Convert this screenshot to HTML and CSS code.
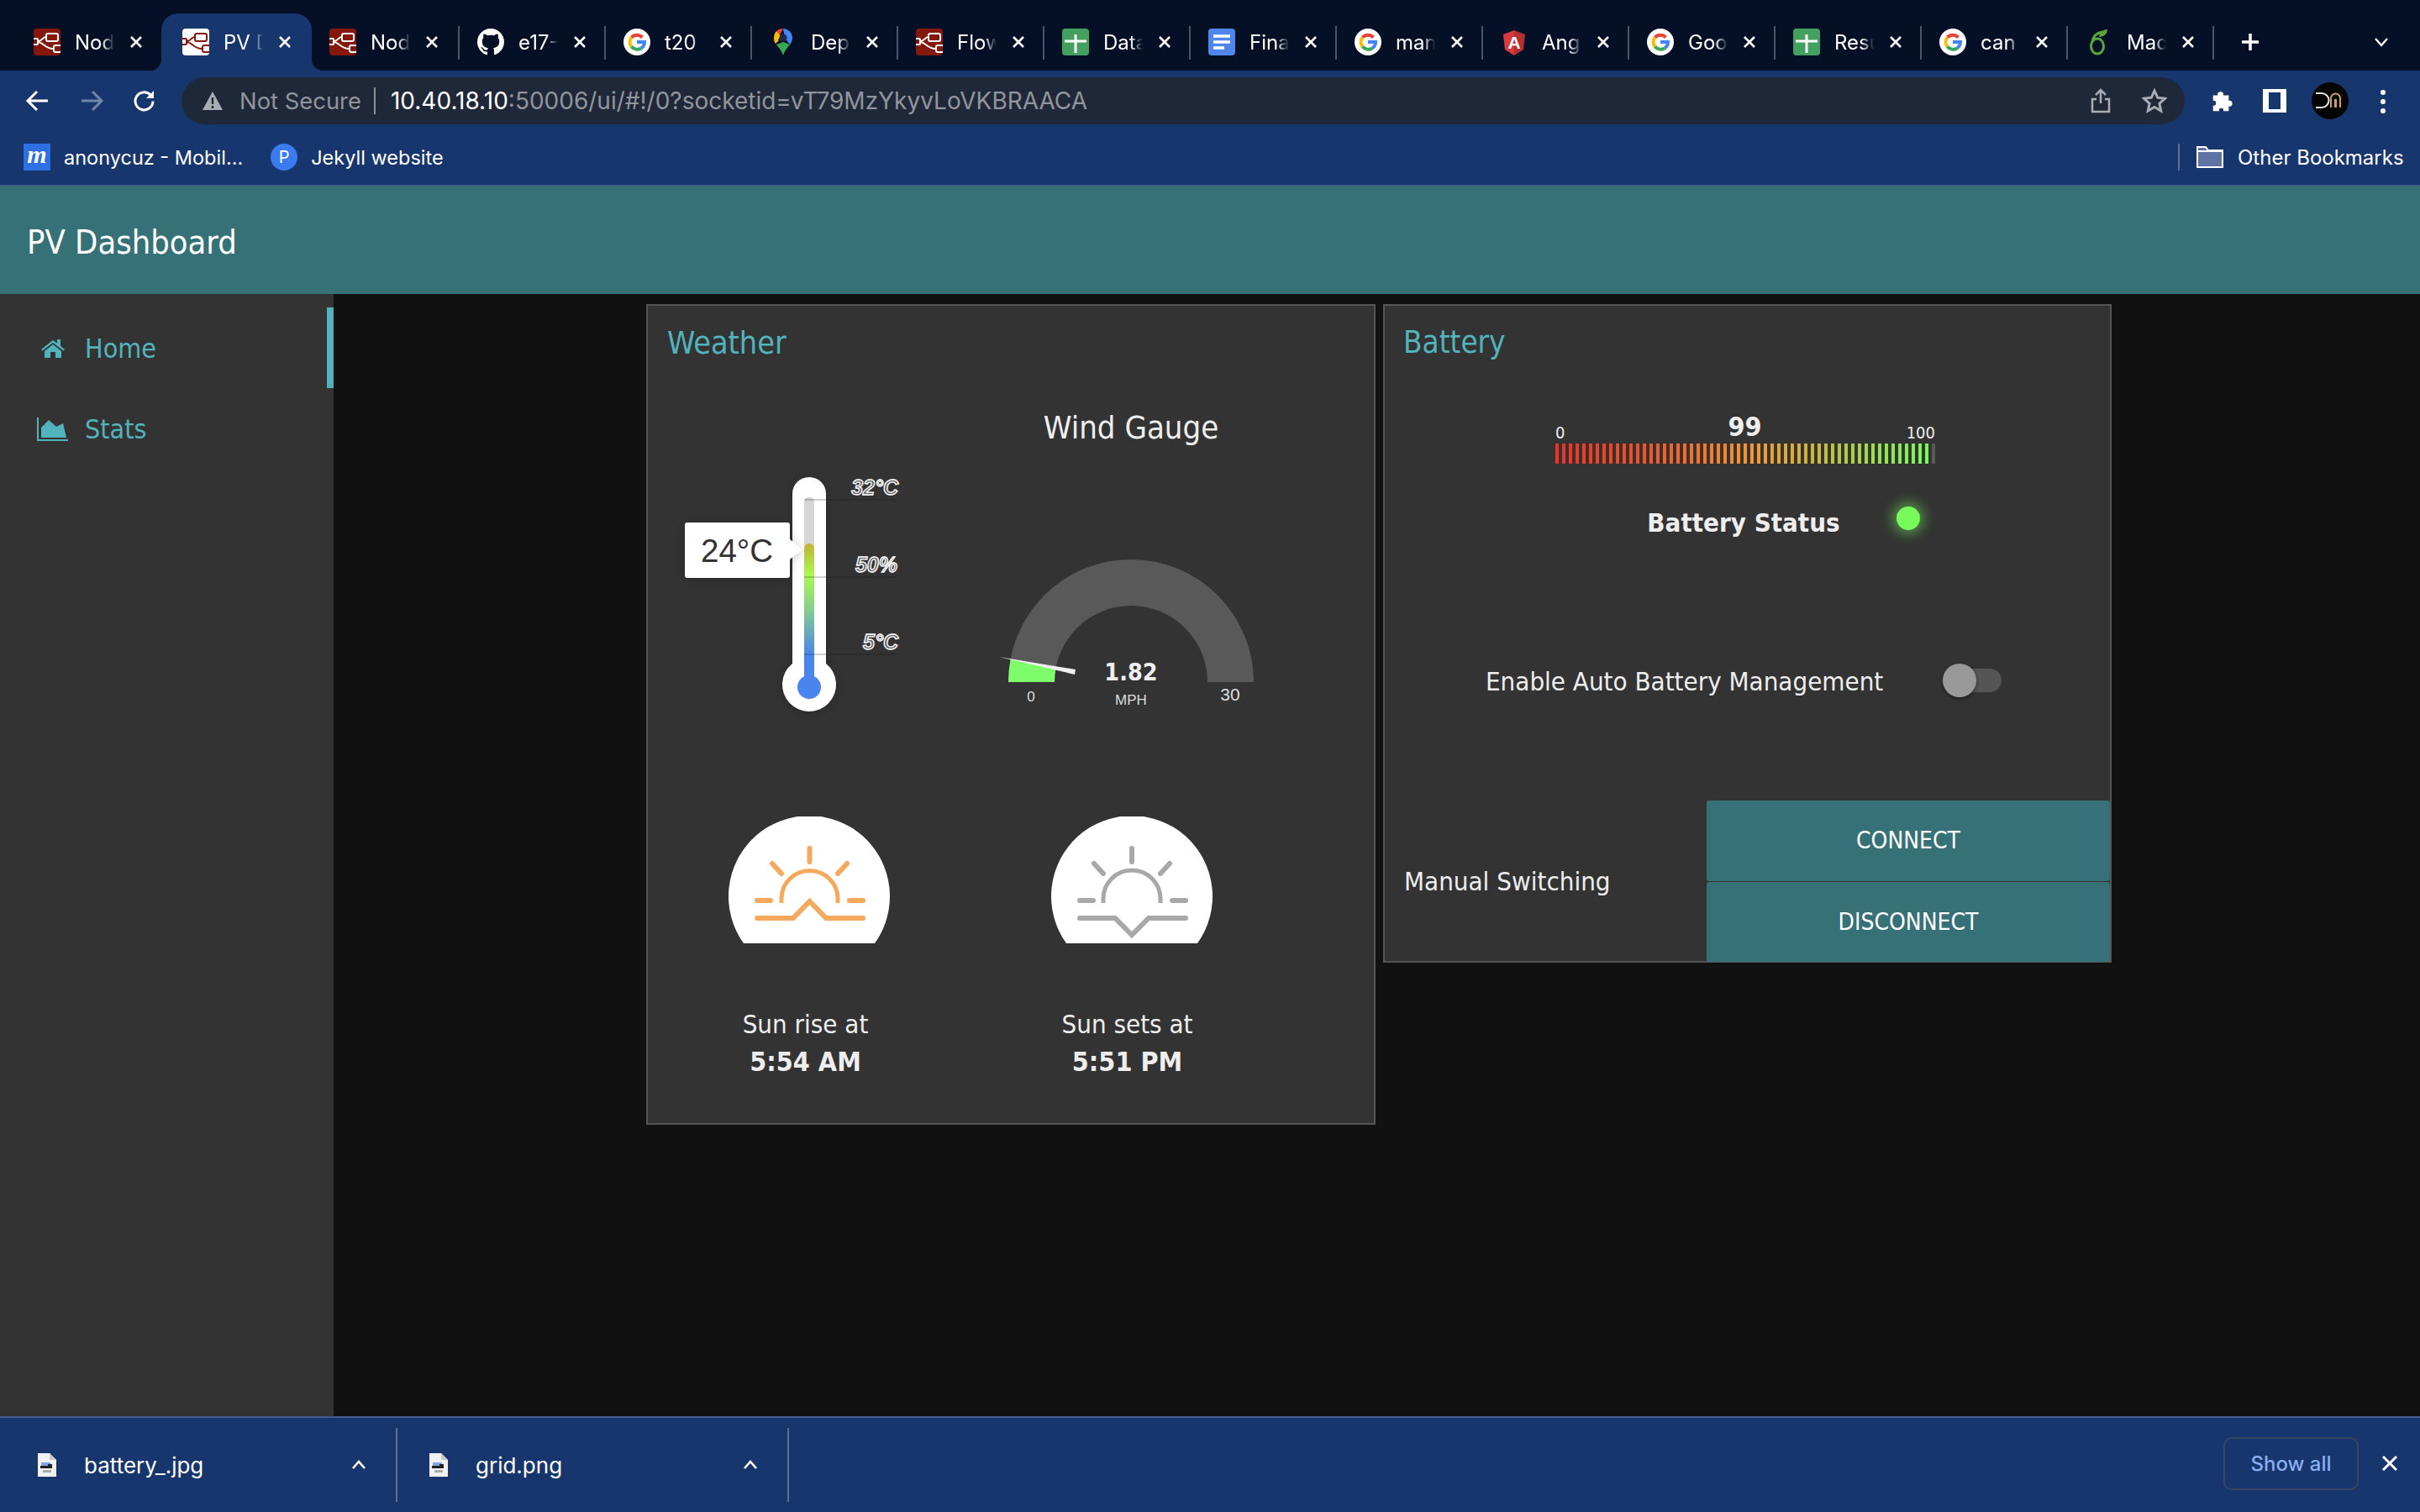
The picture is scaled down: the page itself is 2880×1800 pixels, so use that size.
FILE: index.html
```html
<!DOCTYPE html>
<html lang="en">
<head>
    <meta charset="UTF-8">
    <title>PV Dashboard</title>
    <link rel="stylesheet" href="styles.css">
</head>
<body>
    <svg class="defs" width="0" height="0">
        <symbol id="ic-nodered" viewBox="0 0 32 32">
            <g fill="none" stroke="currentColor" stroke-width="2">
                <rect x="15" y="6" width="14" height="9" rx="2"/>
                <rect x="-1" y="12" width="6" height="7" rx="1"/>
                <rect x="24" y="20" width="9" height="8" rx="2"/>
                <path d="M5 15c6 0 5-5 10-5M5 16c6 0 10 9 19 8"/>
            </g>
        </symbol>
        <symbol id="ic-google" viewBox="0 0 32 32">
            <circle cx="16" cy="16" r="16" fill="#fff"/>
            <path d="M22.5 10.5a9 9 0 0 0-13 0" fill="none" stroke="#ea4335" stroke-width="4"/>
            <path d="M9.5 10.5a9 9 0 0 0 0 11" fill="none" stroke="#fbbc05" stroke-width="4"/>
            <path d="M9.5 21.5a9 9 0 0 0 11.500 2" fill="none" stroke="#34a853" stroke-width="4"/>
            <path d="M21 23.500a9 9 0 0 0 4-7.500h-9" fill="none" stroke="#4285f4" stroke-width="4"/>
        </symbol>
        <symbol id="ic-sheet" viewBox="0 0 32 32">
            <rect width="32" height="32" rx="4" fill="#43a05f"/>
            <path d="M16 7v22M3 15h26" stroke="#fff" stroke-width="3"/>
        </symbol>
    </svg>

    <div class="tabstrip">
        <div class="tab first"><svg class="fav fav-nr"><use href="#ic-nodered"/></svg><span class="tab-text">Nod</span><svg class="tab-x" viewBox="0 0 16 16"><path d="M2 2l12 12M14 2L2 14"/></svg></div>
        <div class="tab active"><svg class="fav fav-nr-light"><use href="#ic-nodered"/></svg><span class="tab-text">PV D</span><svg class="tab-x" viewBox="0 0 16 16"><path d="M2 2l12 12M14 2L2 14"/></svg></div>
        <div class="tab after-active"><svg class="fav fav-nr"><use href="#ic-nodered"/></svg><span class="tab-text">Nod</span><svg class="tab-x" viewBox="0 0 16 16"><path d="M2 2l12 12M14 2L2 14"/></svg></div>
        <div class="tab"><svg class="fav" viewBox="0 0 16 16"><path fill="#fff" d="M8 0C3.58 0 0 3.58 0 8c0 3.54 2.29 6.53 5.47 7.59.4.07.55-.17.55-.38 0-.19-.01-.82-.01-1.490-2.010.37-2.530-.49-2.690-.94-.09-.23-.48-.94-.82-1.130-.28-.15-.68-.52-.01-.53.63-.01 1.080.58 1.230.82.72 1.210 1.870.87 2.330.66.07-.52.28-.87.51-1.070-1.780-.2-3.640-.89-3.640-3.950 0-.87.31-1.590.82-2.150-.08-.2-.36-1.020.08-2.120 0 0 .67-.21 2.200.82.64-.18 1.320-.27 2-.27.68 0 1.360.09 2 .27 1.530-1.040 2.200-.82 2.200-.82.44 1.100.16 1.920.08 2.120.51.56.82 1.270.82 2.150 0 3.070-1.870 3.750-3.650 3.950.29.25.54.73.54 1.480 0 1.070-.01 1.930-.01 2.200 0 .21.15.46.55.38A8.013 8.013 0 0016 8c0-4.420-3.580-8-8-8z"/></svg><span class="tab-text">e17-</span><svg class="tab-x" viewBox="0 0 16 16"><path d="M2 2l12 12M14 2L2 14"/></svg></div>
        <div class="tab"><svg class="fav"><use href="#ic-google"/></svg><span class="tab-text">t20</span><svg class="tab-x" viewBox="0 0 16 16"><path d="M2 2l12 12M14 2L2 14"/></svg></div>
        <div class="tab"><svg class="fav" viewBox="0 0 32 32"><path fill="#34a853" d="M16 32c-2-6-5-9-8-13l8-3 8 3c-3 4-6 7-8 13z"/><path fill="#fbbc05" d="M7 18C5 15 5 13 5 11l6 3z"/><path fill="#ea4335" d="M8 3c2-2 5-3 8-3l-4 8z"/><path fill="#4285f4" d="M16 0c6 0 11 5 11 11 0 3-1 5-3 8l-6-8z"/><path fill="#fbbc05" d="M5 11c0-3 1-6 3-8l5 6-4 6z"/><circle cx="16" cy="11" r="4.500" fill="#1a2a48"/></svg><span class="tab-text">Dep</span><svg class="tab-x" viewBox="0 0 16 16"><path d="M2 2l12 12M14 2L2 14"/></svg></div>
        <div class="tab"><svg class="fav fav-nr"><use href="#ic-nodered"/></svg><span class="tab-text">Flow</span><svg class="tab-x" viewBox="0 0 16 16"><path d="M2 2l12 12M14 2L2 14"/></svg></div>
        <div class="tab"><svg class="fav"><use href="#ic-sheet"/></svg><span class="tab-text">Data</span><svg class="tab-x" viewBox="0 0 16 16"><path d="M2 2l12 12M14 2L2 14"/></svg></div>
        <div class="tab"><svg class="fav" viewBox="0 0 32 32"><rect width="32" height="32" rx="4" fill="#4f86ec"/><path d="M6 9h20M6 16h20M6 23h13" stroke="#fff" stroke-width="3.500"/></svg><span class="tab-text">Fina</span><svg class="tab-x" viewBox="0 0 16 16"><path d="M2 2l12 12M14 2L2 14"/></svg></div>
        <div class="tab"><svg class="fav"><use href="#ic-google"/></svg><span class="tab-text">man</span><svg class="tab-x" viewBox="0 0 16 16"><path d="M2 2l12 12M14 2L2 14"/></svg></div>
        <div class="tab"><svg class="fav" viewBox="0 0 32 32"><path fill="#d63a3e" d="M16 2L3 7l2 18 11 7z"/><path fill="#b52e31" d="M16 2l13 5-2 18-11 7z"/><text x="16" y="24" class="fav-letter">A</text></svg><span class="tab-text">Ang</span><svg class="tab-x" viewBox="0 0 16 16"><path d="M2 2l12 12M14 2L2 14"/></svg></div>
        <div class="tab"><svg class="fav"><use href="#ic-google"/></svg><span class="tab-text">Goo</span><svg class="tab-x" viewBox="0 0 16 16"><path d="M2 2l12 12M14 2L2 14"/></svg></div>
        <div class="tab"><svg class="fav"><use href="#ic-sheet"/></svg><span class="tab-text">Resu</span><svg class="tab-x" viewBox="0 0 16 16"><path d="M2 2l12 12M14 2L2 14"/></svg></div>
        <div class="tab"><svg class="fav"><use href="#ic-google"/></svg><span class="tab-text">can</span><svg class="tab-x" viewBox="0 0 16 16"><path d="M2 2l12 12M14 2L2 14"/></svg></div>
        <div class="tab"><svg class="fav" viewBox="0 0 32 32"><g fill="none" stroke="#5aa63d" stroke-width="3"><ellipse cx="14" cy="21" rx="7.500" ry="9"/><path d="M8 16C9 8 14 5 20 4"/></g><path fill="#5aa63d" d="M16 10c0-5 5-9 10-9 0 5-4 9-10 9z"/></svg><span class="tab-text">Mad</span><svg class="tab-x" viewBox="0 0 16 16"><path d="M2 2l12 12M14 2L2 14"/></svg></div>
        <div class="new-tab"><svg class="plus" viewBox="0 0 24 24"><path d="M12 2v20M2 12h20"/></svg></div>
        <svg class="tab-list" viewBox="0 0 18 12"><path d="M2 2l7 8 7-8"/></svg>
    </div>

    <div class="toolbar">
        <svg class="nav-ic" viewBox="0 0 30 30"><path d="M27 15H4M14 4L3 15l11 11"/></svg>
        <svg class="nav-ic dim" viewBox="0 0 30 30"><path d="M3 15h23M16 4l11 11-11 11"/></svg>
        <svg class="nav-ic reload" viewBox="0 0 30 30"><path d="M25 15.500a10.500 10.500 0 1 1-3-7.500"/><path class="solid" d="M26 3v9h-9z"/></svg>
        <div class="omnibox">
            <svg class="warn" viewBox="0 0 26 24"><path fill="#a9adb3" d="M13 1l12 22H1z"/><path d="M13 8v8M13 18v3" stroke="#1f2838" stroke-width="2.500"/></svg>
            <span class="not-secure">Not Secure</span>
            <span class="omni-sep"></span>
            <span class="url"><b>10.40.18.10</b>:50006/ui/#!/0?socketid=vT79MzYkyvLoVKBRAACA</span>
            <svg class="omni-ic" viewBox="0 0 24 30"><path d="M12 18V2M6 8l6-6 6 6M7 13H2v15h20V13h-5"/></svg>
            <svg class="omni-ic star" viewBox="0 0 30 30"><path d="M15 3l3.700 8.200 8.800 1-6.600 6 1.900 8.800L15 22.500 7.200 27l1.900-8.800-6.600-6 8.800-1z"/></svg>
        </div>
        <svg class="tool-ic puzzle" viewBox="0 0 30 30"><path fill="#fff" d="M4 8h6c-2-6 9-6 7 0h7v7c6-2 6 9 0 7v6h-7c2-5-7-5-5 0H4v-7c5 2 5-8 0-6z"/></svg>
        <svg class="tool-ic panel" viewBox="0 0 28 28"><path fill="#fff" fill-rule="evenodd" d="M0 0h28v28H0zM7 4v20h14V4z"/></svg>
        <svg class="avatar" viewBox="0 0 44 44"><circle cx="22" cy="22" r="22" fill="#050505"/><path d="M5 13h7a8.500 8.500 0 0 1 0 17H5" fill="none" stroke="#e9e4d6" stroke-width="2"/><path d="M23 30V19a5.500 5.500 0 0 1 11 0v11M28 30V21a.5.5 0 0 1 1 0v9" fill="none" stroke="#c9a45a" stroke-width="2"/></svg>
        <div class="kebab"><i></i><i></i><i></i></div>
    </div>

    <div class="bookmarks">
        <span class="bm-m">m</span><span class="bm-text">anonycuz - Mobil...</span>
        <span class="bm-p">P</span><span class="bm-text">Jekyll website</span>
        <span class="bm-sep"></span>
        <svg class="bm-folder" viewBox="0 0 32 26"><path fill="#5f74a4" stroke="#fff" stroke-width="2" d="M1 1h10l3 4h17v20H1z"/><path d="M1 6h30" stroke="#fff" stroke-width="2"/></svg>
        <span class="bm-text other">Other Bookmarks</span>
    </div>

    <header class="app-header">PV Dashboard</header>

    <div class="app-body">
        <nav class="sidenav">
            <a class="nav-item active">
                <span class="nav-icon"><svg width="30" height="24" viewBox="0 0 30 24"><path d="M15 2L1 13l1.500 1.500L15 5l12.500 9.500L29 13l-5-4V1h-4v4.500z"/><path d="M5 15l10-8 10 8v8h-7v-7h-6v7H5z"/></svg></span>
                Home
            </a>
            <a class="nav-item">
                <span class="nav-icon"><svg width="38" height="28" viewBox="0 0 38 28"><path d="M1 0v27h36" fill="none" stroke="currentColor" stroke-width="2"/><path d="M5 24V12l9-9 9 8 8-4 4 17z"/></svg></span>
                Stats
            </a>
        </nav>

        <main class="content">
            <section class="card weather">
                <h2 class="card-title">Weather</h2>
                <div class="weather-grid">
                    <svg class="thermo" viewBox="771 452 384 418">
                        <defs>
                            <linearGradient id="mercury" x1="0" y1="647" x2="0" y2="780" gradientUnits="userSpaceOnUse">
                                <stop offset="0" stop-color="#c2b338"/>
                                <stop offset="0.28" stop-color="#a9f84f"/>
                                <stop offset="0.55" stop-color="#8bd586"/>
                                <stop offset="0.8" stop-color="#68a9bc"/>
                                <stop offset="1" stop-color="#4a84ee"/>
                            </linearGradient>
                            <filter id="soft" x="-30%" y="-30%" width="160%" height="160%"><feDropShadow dx="0" dy="2" stdDeviation="6" flood-color="#000" flood-opacity="0.22"/></filter>
                        </defs>
                        <path filter="url(#soft)" fill="#fff" d="M943 588a20 20 0 0 1 40 0v202a32 32 0 1 1-40 0z"/>
                        <rect x="957" y="592" width="12" height="70" rx="5" fill="#d6d6d6"/>
                        <path fill="url(#mercury)" d="M957 653a6 6 0 0 1 12 0v130h-12z"/>
                        <rect x="957" y="778" width="12" height="30" fill="#4a84ee"/>
                        <circle cx="963" cy="818" r="14" fill="#4a84ee"/>
                        <path d="M957 595h26M957 687h26M957 779h26" stroke="#333" stroke-opacity="0.3" stroke-width="1.500"/>
                        <path d="M983 595h84M983 687h84M983 779h84" stroke="#2a2a2a" stroke-width="1.500"/>
                        <text class="thermo-label" x="1069" y="589">32°C</text>
                        <text class="thermo-label" x="1068" y="681">50%</text>
                        <text class="thermo-label" x="1069" y="773">5°C</text>
                        <path filter="url(#soft)" fill="#fff" d="M818 622h119a3 3 0 0 1 3 3v17l14 12-14 12v19a3 3 0 0 1-3 3H818a3 3 0 0 1-3-3v-60a3 3 0 0 1 3-3z"/>
                        <text class="thermo-value" x="877" y="669">24°C</text>
                    </svg>
                    <div class="gauge">
                        <div class="gauge-title">Wind Gauge</div>
                        <svg class="gauge-svg" viewBox="1155 570 382 300">
                            <path fill="#595959" d="M1200 812a146 146 0 0 1 292 0h-55a91 91 0 0 0-182 0z"/>
                            <path fill="#7dfd6a" d="M1200 812a146 146 0 0 1 2.700-27.600l54 10.400a91 91 0 0 0-1.700 17.200z"/>
                            <path fill="#eee" d="M1189 782l91 15-1 6z"/>
                            <text class="g-bold" x="1346" y="810">1.82</text>
                            <text class="g-small" x="1227" y="835">0</text>
                            <text class="g-small" x="1346" y="839">MPH</text>
                            <text class="g-max" x="1464" y="834">30</text>
                        </svg>
                    </div>
                    <svg class="sun" viewBox="771 972 384 151">
                        <path class="sun-bg" d="M885 1123a96 96 0 1 1 156 0z"/>
                        <g class="sun-lines rise">
                            <path d="M963.500 1010v16M919 1028l11 12M1008 1028l-11 12M901 1072h16M1011 1072h16M901 1093h43l19.500-20 19.500 20h44"/>
                            <path class="thin" d="M930 1075v-5a33.500 33.500 0 0 1 67 0v5"/>
                        </g>
                    </svg>
                    <svg class="sun" viewBox="1155 972 382 151">
                        <path class="sun-bg" d="M1269 1123a96 96 0 1 1 156 0z"/>
                        <g class="sun-lines set">
                            <path d="M1347 1010v16M1302 1028l11 12M1392 1028l-11 12M1285 1072h16M1395 1072h16M1285 1093h42l20 20 20-20h44"/>
                            <path class="thin" d="M1313 1075v-5a34 34 0 0 1 68 0v5"/>
                        </g>
                    </svg>
                    <div class="sun-text">Sun rise at<br><b>5:54 AM</b></div>
                    <div class="sun-text">Sun sets at<br><b>5:51 PM</b></div>
                </div>
            </section>

            <section class="card battery">
                <h2 class="card-title">Battery</h2>
                <div class="level">
                    <div class="level-labels"><span>0</span><b>99</b><span>100</span></div>
                    <div class="level-bars"><div class="level-fill"></div><div class="level-rest"></div></div>
                </div>
                <div class="status-row"><b>Battery Status</b><span class="led"></span></div>
                <div class="toggle-row">
                    <span>Enable Auto Battery Management</span>
                    <span class="toggle"><span class="toggle-thumb"></span></span>
                </div>
                <div class="switch-row">
                    <span class="switch-label">Manual Switching</span>
                    <div class="switch-btns">
                        <button class="btn">CONNECT</button>
                        <button class="btn">DISCONNECT</button>
                    </div>
                </div>
            </section>
        </main>
    </div>

    <footer class="downloads">
        <div class="dl-item">
            <svg class="dl-file" viewBox="0 0 22 28"><path fill="#f1f1f1" d="M0 0h14l8 8v20H0z"/><path fill="#c9c9c9" d="M14 0l8 8h-8z"/><rect x="4" y="11" width="11" height="6" fill="#7fa6e0"/><rect x="3" y="15" width="14" height="3" fill="#222"/><rect x="12" y="13" width="5" height="5" fill="#222"/><rect x="6" y="20" width="10" height="3" fill="#aaa"/></svg>
            <span class="dl-name">battery_.jpg</span>
            <svg class="dl-caret" viewBox="0 0 18 12"><path d="M2 10l7-8 7 8"/></svg>
        </div>
        <div class="dl-item">
            <svg class="dl-file" viewBox="0 0 22 28"><path fill="#f1f1f1" d="M0 0h14l8 8v20H0z"/><path fill="#c9c9c9" d="M14 0l8 8h-8z"/><rect x="4" y="11" width="11" height="6" fill="#7fa6e0"/><rect x="3" y="15" width="14" height="3" fill="#222"/><rect x="12" y="13" width="5" height="5" fill="#222"/><rect x="6" y="20" width="10" height="3" fill="#aaa"/></svg>
            <span class="dl-name">grid.png</span>
            <svg class="dl-caret" viewBox="0 0 18 12"><path d="M2 10l7-8 7 8"/></svg>
        </div>
        <span class="dl-spacer"></span>
        <button class="show-all">Show all</button>
        <svg class="dl-close" viewBox="0 0 18 18"><path d="M1 1l16 16M17 1L1 17"/></svg>
    </footer>
</body>
</html>
```
FILE: styles.css
```css
* {
    box-sizing: border-box;
}
html, body {
    margin: 0;
    height: 100%;
    overflow: hidden;
}
body {
    display: flex;
    flex-direction: column;
    background: #111;
    color: #eee;
    font-family: "DejaVu Sans Condensed", "DejaVu Sans", sans-serif;
    font-stretch: condensed;
}
.defs {
    position: absolute;
}

/* browser chrome */
.tabstrip {
    height: 84px;
    flex: none;
    display: flex;
    align-items: flex-end;
    padding-left: 23px;
    background: #051026;
    font-family: Inter, "Liberation Sans", sans-serif;
    font-stretch: normal;
    color: #fff;
}
.tab {
    position: relative;
    width: 174px;
    height: 68px;
    flex: none;
    display: flex;
    align-items: center;
    padding: 0 0 0 23px;
}
.tab.first {
    padding-left: 17px;
}
.tab.after-active {
    padding-left: 21px;
}
.tab::before {
    content: "";
    position: absolute;
    left: 0;
    top: 15px;
    bottom: 13px;
    border-left: 2px solid #4b5567;
}
.tab.first::before, .tab.active::before, .tab.after-active::before {
    display: none;
}
.tab.active {
    width: 179px;
    margin-left: -5px;
    padding-left: 25px;
    background: #18366e;
    border-radius: 20px 20px 0 0;
}
.tab.active::after {
    content: "";
    position: absolute;
    left: -14px;
    right: -14px;
    bottom: 0;
    height: 14px;
    background:
        radial-gradient(circle at 0 0, transparent 14px, #18366e 14.5px) left bottom / 14px 14px no-repeat,
        radial-gradient(circle at 100% 0, transparent 14px, #18366e 14.5px) right bottom / 14px 14px no-repeat;
}
.fav {
    width: 32px;
    height: 32px;
    flex: none;
}
.fav-nr {
    background: #85180d;
    border-radius: 4px;
    color: #fff;
}
.fav-nr-light {
    background: #fff;
    border-radius: 4px;
    color: #85180d;
}
.fav-letter {
    fill: #fff;
    font: 700 21px "Liberation Sans", sans-serif;
    text-anchor: middle;
}
.tab-text {
    width: 62px;
    margin-left: 17px;
    white-space: nowrap;
    font-size: 24px;
    -webkit-mask-image: linear-gradient(90deg, #000 52%, transparent 76%);
    mask-image: linear-gradient(90deg, #000 52%, transparent 76%);
}
.tab-x {
    width: 16px;
    height: 16px;
    margin-left: 3px;
    fill: none;
    stroke: #fff;
    stroke-width: 2.6;
}
.new-tab {
    position: relative;
    width: 90px;
    height: 68px;
    flex: none;
    display: flex;
    align-items: center;
    padding-left: 33px;
}
.new-tab::before {
    content: "";
    position: absolute;
    left: 0;
    top: 15px;
    bottom: 13px;
    border-left: 2px solid #4b5567;
}
.plus {
    width: 24px;
    height: 24px;
    fill: none;
    stroke: #fff;
    stroke-width: 3.500;
}
.tab-list {
    width: 18px;
    height: 12px;
    margin: 0 0 28px 102px;
    fill: none;
    stroke: #fff;
    stroke-width: 2.400;
}

.toolbar {
    height: 72px;
    flex: none;
    display: flex;
    align-items: flex-start;
    padding: 8px 0 0 30px;
    background: #18366e;
    font-family: Inter, "Liberation Sans", sans-serif;
    font-stretch: normal;
}
.nav-ic {
    width: 30px;
    height: 30px;
    margin: 13px 34px 0 0;
    flex: none;
    fill: none;
    stroke: #fff;
    stroke-width: 3;
}
.nav-ic.dim {
    stroke: #7185ab;
}
.nav-ic .solid {
    fill: #fff;
    stroke: none;
}
.nav-ic.reload {
    margin-right: 0;
    margin-left: -1px;
}
.omnibox {
    width: 2384px;
    height: 56px;
    margin-left: 29px;
    flex: none;
    display: flex;
    align-items: center;
    padding: 0 24px;
    background: #1f2838;
    border-radius: 28px;
    color: #91959d;
    white-space: nowrap;
}
.warn {
    width: 26px;
    height: 24px;
    flex: none;
}
.not-secure {
    margin-left: 19px;
    font-size: 27.400px;
}
.omni-sep {
    height: 32px;
    margin: 0 18px 0 15px;
    border-left: 2px solid #8c9098;
}
.url {
    flex: 1;
    font-size: 28px;
}
.url b {
    font-weight: 400;
    color: #fff;
}
.omni-ic {
    width: 24px;
    height: 30px;
    flex: none;
    fill: none;
    stroke: #a9adb3;
    stroke-width: 2.500;
}
.omni-ic.star {
    width: 30px;
    margin-left: 37px;
    margin-right: -3px;
    stroke-width: 3;
}
.tool-ic {
    flex: none;
    margin-top: 14px;
}
.tool-ic.puzzle {
    width: 28px;
    height: 28px;
    margin-left: 30px;
}
.tool-ic.panel {
    width: 28px;
    height: 28px;
    margin-left: 35px;
}
.avatar {
    width: 44px;
    height: 44px;
    margin: 6px 0 0 30px;
    flex: none;
}
.kebab {
    display: flex;
    flex-direction: column;
    gap: 5px;
    margin: 15px 0 0 38px;
}
.kebab i {
    width: 6px;
    height: 6px;
    border-radius: 50%;
    background: #fff;
}

.bookmarks {
    height: 64px;
    flex: none;
    display: flex;
    align-items: center;
    padding: 0 0 2px 28px;
    background: #18366e;
    color: #fff;
    font-family: Inter, "Liberation Sans", sans-serif;
    font-stretch: normal;
}
.bm-text {
    font-size: 23.500px;
    white-space: nowrap;
}
.bm-m {
    width: 32px;
    height: 32px;
    margin-right: 16px;
    background: #2f6fe4;
    font: italic 700 30px/26px "Liberation Serif", serif;
    text-align: center;
}
.bm-p {
    width: 32px;
    height: 32px;
    margin: 0 16px 0 33px;
    border-radius: 50%;
    background: #3a7bf0;
    font-size: 20px;
    line-height: 32px;
    text-align: center;
}
.bm-sep {
    height: 32px;
    margin-left: auto;
    border-left: 2px solid #5b6f99;
}
.bm-folder {
    width: 32px;
    height: 26px;
    margin: 0 17px 0 20px;
    flex: none;
}
.bm-text.other {
    width: 217px;
    font-size: 24px;
}

/* dashboard */
.app-header {
    height: 130px;
    flex: none;
    display: flex;
    align-items: center;
    padding: 3px 0 0 32px;
    border-top: 2px solid #3f5f8a;
    background: #367178;
    font-size: 39.500px;
    color: #fff;
}
.app-body {
    flex: 1;
    min-height: 0;
    display: flex;
}
.sidenav {
    width: 397px;
    flex: none;
    padding-top: 16px;
    background: #333;
}
.nav-item {
    height: 96px;
    display: flex;
    align-items: center;
    padding-top: 2px;
    color: #52b3bd;
    font-size: 32px;
}
.nav-item.active {
    border-right: 8px solid #52b3bd;
}
.nav-icon {
    width: 101px;
    display: flex;
    justify-content: center;
    padding-left: 24px;
}
.nav-icon svg {
    fill: #52b3bd;
    color: #52b3bd;
}
.content {
    flex: 1;
    display: flex;
    align-items: flex-start;
    gap: 9px;
    padding: 12px 0 0 372px;
}
.card {
    background: #333;
    border: 2px solid #555;
}
.card-title {
    height: 88px;
    margin: 0;
    padding-left: 23px;
    color: #52b3bd;
    font-size: 37.500px;
    font-weight: 400;
    line-height: 88px;
}
.weather {
    width: 868px;
    height: 977px;
}
.battery .card-title {
    padding-left: 22px;
    font-size: 36.500px;
}
.weather-grid {
    display: grid;
    grid-template-columns: 384px 382px;
    grid-template-rows: 418px 151px auto;
}
.thermo, .sun {
    display: block;
    width: 100%;
    height: 100%;
}
.sun {
    grid-row: 2;
    transform: translateY(102px);
}
.thermo-label {
    fill: #666;
    stroke: #fff;
    stroke-width: 1.300;
    font: italic 700 25px "Liberation Sans", sans-serif;
    text-anchor: end;
}
.thermo-value {
    fill: #333;
    font: 38.500px "Liberation Sans", sans-serif;
    text-anchor: middle;
}
.gauge-title {
    height: 118px;
    font-size: 38px;
    line-height: 114px;
    text-align: center;
    color: #eee;
}
.gauge-svg {
    display: block;
    width: 382px;
    height: 300px;
}
.g-bold {
    fill: #eee;
    font-size: 28.500px;
    font-weight: 700;
    text-anchor: middle;
}
.g-small {
    fill: #ddd;
    font: 17px "Liberation Sans", sans-serif;
    text-anchor: middle;
}
.g-max {
    fill: #ddd;
    font: 21px "Liberation Sans", sans-serif;
    text-anchor: middle;
}
.sun-bg {
    fill: #fff;
}
.sun-lines {
    fill: none;
    stroke-width: 6;
    stroke-linecap: round;
}
.sun-lines .thin {
    stroke-width: 5;
    stroke-linecap: butt;
}
.sun-lines.rise {
    stroke: #f5a95c;
}
.sun-lines.set {
    stroke: #a8a8a8;
}
.sun-text {
    grid-row: 3;
    margin-top: 176px;
    padding-right: 9px;
    font-size: 31px;
    line-height: 45px;
    text-align: center;
}
.sun-text b {
    font-size: 32px;
}

.battery {
    width: 867px;
    height: 784px;
}
.level {
    width: 452px;
    margin: 42px 0 0 203px;
}
.level-labels {
    height: 34px;
    display: flex;
    justify-content: space-between;
    align-items: flex-end;
    font-size: 20px;
    line-height: 26px;
}
.level-labels b {
    margin-left: 22px;
    font-size: 32px;
    line-height: 40px;
}
.level-bars {
    height: 24px;
    display: flex;
}
.level-fill {
    flex: 1;
    background: linear-gradient(90deg, #ee3124 0, #f1552a 25%, #f59631 52%, #c8b83c 70%, #8fe74e 88%, #78f95c 100%);
    -webkit-mask-image: repeating-linear-gradient(90deg, #000 0 4px, transparent 4px 8px);
    mask-image: repeating-linear-gradient(90deg, #000 0 4px, transparent 4px 8px);
}
.level-rest {
    width: 4px;
    background: #595959;
}
.status-row {
    height: 50px;
    margin: 45px 0 0 312px;
    display: flex;
    align-items: center;
    font-size: 31px;
}
.status-row b {
    width: 230px;
    white-space: nowrap;
    text-align: center;
}
.led {
    width: 28px;
    height: 28px;
    margin: 0 0 11px 67px;
    border-radius: 50%;
    background: #78f95c;
    box-shadow: 0 0 16px 4px rgba(120, 249, 92, 0.55);
}
.toggle-row {
    height: 44px;
    margin: 142px 0 0 120px;
    display: flex;
    align-items: center;
    font-size: 31px;
    white-space: nowrap;
}
.toggle {
    position: relative;
    width: 70px;
    height: 28px;
    margin: 0 0 2px 71px;
    border-radius: 14px;
    background: #555;
}
.toggle-thumb {
    position: absolute;
    left: 0;
    top: -6px;
    width: 40px;
    height: 40px;
    border-radius: 50%;
    background: #999;
    box-shadow: 0 2px 4px rgba(0, 0, 0, 0.4);
}
.switch-row {
    margin-top: 120px;
    display: flex;
    align-items: center;
}
.switch-label {
    width: 383px;
    padding-left: 23px;
    font-size: 31px;
    white-space: nowrap;
}
.switch-btns {
    width: 480px;
    display: flex;
    flex-direction: column;
    gap: 1px;
}
.btn {
    height: 95.500px;
    border: 0;
    border-radius: 3px;
    background: #367178;
    color: #fff;
    font: inherit;
    font-size: 28px;
}

/* download shelf */
.downloads {
    height: 114px;
    flex: none;
    display: flex;
    align-items: center;
    padding-left: 7px;
    border-top: 2px solid #3f5f8a;
    background: #18366e;
    color: #fff;
    font-family: Inter, "Liberation Sans", sans-serif;
    font-stretch: normal;
}
.dl-item {
    width: 466px;
    height: 88px;
    flex: none;
    display: flex;
    align-items: center;
    padding-left: 38px;
    border-right: 2px solid #5b6f99;
}
.dl-file {
    width: 22px;
    height: 28px;
    flex: none;
}
.dl-name {
    width: 318px;
    margin-left: 33px;
    font-size: 26px;
}
.dl-caret {
    width: 18px;
    height: 12px;
    fill: none;
    stroke: #fff;
    stroke-width: 2.600;
}
.dl-spacer {
    flex: 1;
}
.show-all {
    width: 161px;
    height: 63px;
    margin-bottom: 4px;
    border: 2px solid #3a4660;
    border-radius: 10px;
    background: none;
    color: #8aaef0;
    font: 500 24px Inter, "Liberation Sans", sans-serif;
}
.dl-close {
    width: 18px;
    height: 18px;
    margin: 0 27px 4px 28px;
    fill: none;
    stroke: #fff;
    stroke-width: 3;
}
```
